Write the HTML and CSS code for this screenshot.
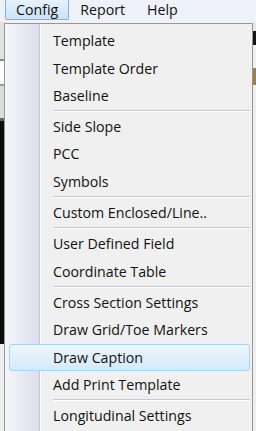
FILE: index.html
```html
<!DOCTYPE html>
<html>
<head>
<meta charset="utf-8">
<link rel="stylesheet" href="styles.css">
</head>
<body>
<div class="app">
  <div class="menubar">
    <div class="mb-item active">Config</div>
    <div class="mb-item">Report</div>
    <div class="mb-item">Help</div>
  </div>
  <div class="body">
    <div class="strip left">
      <div class="b b1"></div><div class="b b2"></div><div class="b b3"></div><div class="b b4"></div><div class="b b5"></div><div class="b b6"></div><div class="b b7"></div><div class="b b8"></div>
    </div>
    <div class="mid"></div>
    <div class="strip right">
      <div class="r r1"></div><div class="r r2"></div><div class="r r3"></div><div class="r r4"></div><div class="r r5"></div>
    </div>
  </div>
</div>

<div class="menu">
  <div class="item">Template</div>
  <div class="item">Template Order</div>
  <div class="item">Baseline</div>
  <div class="sep"></div>
  <div class="item">Side Slope</div>
  <div class="item">PCC</div>
  <div class="item">Symbols</div>
  <div class="sep"></div>
  <div class="item">Custom Enclosed/Line..</div>
  <div class="sep"></div>
  <div class="item">User Defined Field</div>
  <div class="item">Coordinate Table</div>
  <div class="sep"></div>
  <div class="item">Cross Section Settings</div>
  <div class="item">Draw Grid/Toe Markers</div>
  <div class="item hot">Draw Caption</div>
  <div class="item">Add Print Template</div>
  <div class="sep"></div>
  <div class="item">Longitudinal Settings</div>
</div>
</body>
</html>
```

FILE: styles.css
```css
html, body {
  margin: 0;
  padding: 0;
}
body {
  width: 256px;
  height: 431px;
  overflow: hidden;
  position: relative;
  font-family: "Segoe UI", "Open Sans", "Noto Sans", sans-serif;
  font-size: 14.2px;
  color: #111111;
  background: #f0f0f0;
}
.app {
  display: flex;
  flex-direction: column;
  height: 431px;
}
.menubar {
  height: 22px;
  display: flex;
  align-items: flex-start;
  padding-left: 5px;
  background: #eef1f9;
  flex: none;
}
.mb-item {
  height: 20px;
  line-height: 19px;
  padding: 0 10px;
  border: 1px solid transparent;
  border-top: none;
  box-sizing: border-box;
  white-space: nowrap;
}
.mb-item.active {
  border-color: #7db2e6;
  border-top: none;
  border-radius: 0 0 2px 2px;
  background: linear-gradient(#e6f1fc, #cbe3f8);
}
.body {
  flex: 1;
  display: flex;
}
.strip {
  display: flex;
  flex-direction: column;
}
.strip.left { width: 4px; }
.strip.right { width: 3px; }
.mid { flex: 1; }
.b1 { height: 37px; background: #e2e2e2; }
.b2 { height: 2px; background: #8a8a8a; }
.b3 { height: 23px; background: #ffffff; }
.b4 { height: 2px; background: #9a9a9a; }
.b5 { height: 32px; background: #dcdcdc; }
.b6 { height: 3px; background: #6a6a6a; }
.b7 { height: 223px; background: #0c0c0c; }
.b8 { flex: 1; background: #efefef; }
.r1 { height: 9px; background: #e8e8e8; }
.r2 { height: 14px; background: #141414; }
.r3 { height: 23px; background: #f0f0f0; }
.r4 { height: 17px; background: #9c7e52; }
.r5 { flex: 1; background: #efefef; }

.menu {
  position: absolute;
  left: 4px;
  top: 23px;
  width: 249px;
  height: 420px;
  box-sizing: border-box;
  border: 1px solid #979797;
  border-bottom: none;
  padding-top: 3.3px;
  background:
    linear-gradient(90deg,
      #f5f6fb 0px, #dcdfeb 34px,
      #c3c6d8 34px, #c3c6d8 35px,
      #ffffff 35px, #ffffff 36px,
      #f0f0f0 36px);
}
.item {
  height: 27.3px;
  line-height: 27px;
  padding-left: 48px;
  white-space: nowrap;
  box-sizing: border-box;
}
.item.hot {
  margin: 0 2px 0 4px;
  padding-left: 43px;
  border: 1px solid #a6d4f6;
  border-radius: 3px;
  line-height: 25px;
  background: linear-gradient(#edf6fd, #d3eafb);
}
.sep {
  height: 4px;
  margin: 0 2px 0 48px;
  box-sizing: border-box;
  padding-top: 1px;
}
.sep::before {
  content: "";
  display: block;
  height: 1px;
  border-top: 1px solid #c6c7d6;
  background: #ffffff;
}
```
